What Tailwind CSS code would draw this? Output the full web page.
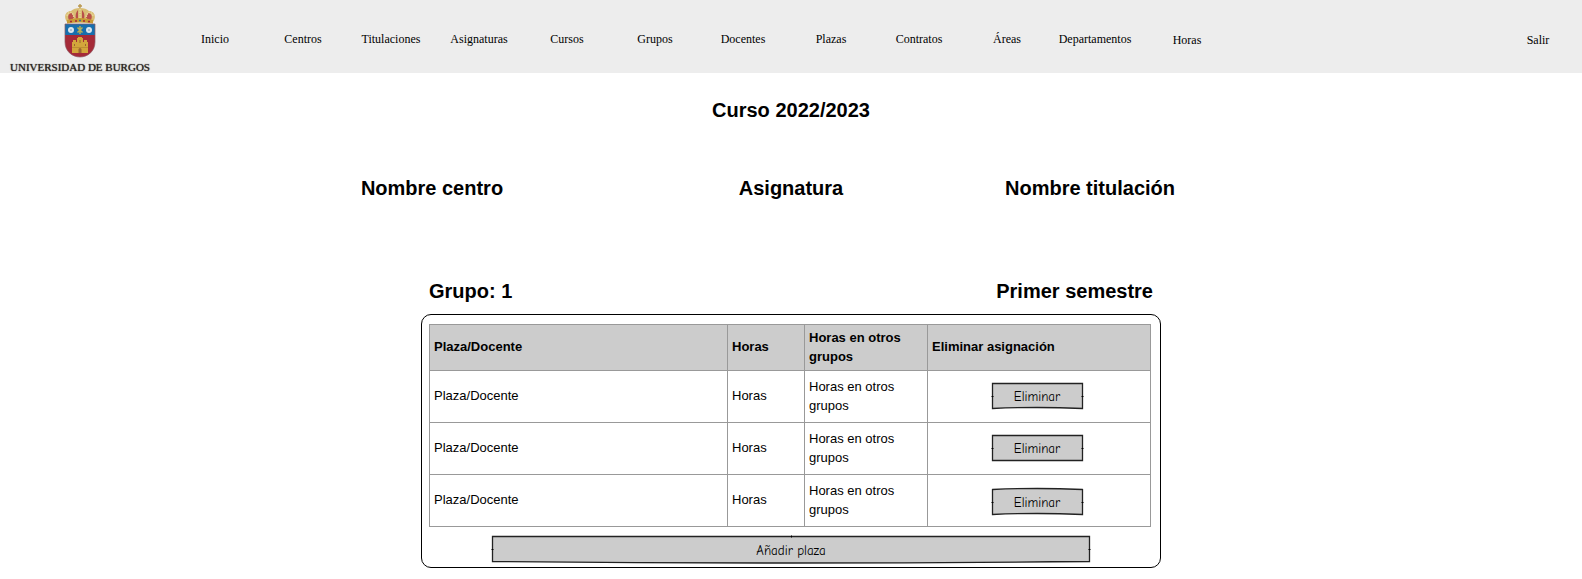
<!DOCTYPE html>
<html lang="es">
<head>
<meta charset="utf-8">
<meta name="viewport" content="width=device-width, initial-scale=1">
<title>Universidad de Burgos - Curso 2022/2023</title>
<script src="https://cdn.jsdelivr.net/npm/@tailwindcss/browser@4"></script>
</head>
<body class="min-h-screen bg-white font-['Liberation_Sans',Arial,sans-serif] text-black">

<header class="flex h-[73px] items-stretch bg-[#ededed] font-['Liberation_Serif',serif] text-xs">
  <a href="#" class="flex w-[171px] shrink-0 flex-col items-start pt-1 pl-[10px] text-[11px] leading-3 whitespace-nowrap text-[#2b2522] text-shadow-[0_0_1px_#2b2522]">
    <svg class="mb-[3px] ml-[54px] block h-[54px] w-8" viewBox="0 0 32 54" aria-hidden="true">
      <!-- crown -->
      <path d="M16 0v5M14 2h4" stroke="#b9974e" stroke-width="1.4"/>
      <path d="M3 18C-1 12 2 7 7 7c2-2 5-3 9-3s7 1 9 3c5 0 8 5 4 11z" fill="#d9bd74"/>
      <path d="M5 16C3 12 5 9 8 9l3 7zM21 16l3-7c3 0 5 3 3 7zM12 15c-1-4 0-7 2-9v9zM18 15V6c2 2 3 5 2 9z" fill="#b9504a"/>
      <path d="M3 12C4 7 10 6 10 16M29 12C28 7 22 6 22 16M16 5v12" fill="none" stroke="#e8d69b" stroke-width="1.5" stroke-dasharray="1.5 1"/>
      <path d="M3 16q13-4 26 0v3.500q-13-2-26 0z" fill="#c89b35"/>
      <path d="M6 17.500h2M11 17h2M19 17h2M24 17.500h2" stroke="#a62835" stroke-width="1.300"/>
      <path d="M15 16.500h2" stroke="#3f7293" stroke-width="1.500"/>
      <!-- shield -->
      <path d="M1 20h30v18c0 9-7 15-15 15S1 47 1 38z" fill="#a52a38"/>
      <path d="M1 20h30v11H1z" fill="#176fae"/>
      <path d="M1 20h30v18c0 9-7 15-15 15S1 47 1 38z" fill="none" stroke="#8d5961" stroke-width=".7"/>
      <circle cx="7" cy="26" r="3" fill="#dce6ec"/>
      <circle cx="25" cy="26" r="3" fill="#dce6ec"/>
      <circle cx="7" cy="26" r="1" fill="#9cb5c6"/>
      <circle cx="25" cy="26" r="1" fill="#9cb5c6"/>
      <path d="M16 22v8M13.500 23.500l5 5M18.500 23.500l-5 5" stroke="#b5ae58" stroke-width="1.500"/>
      <!-- castle -->
      <path d="M8 49V38h1v-2h3v2h1v-4h1v-1h4v1h1v4h1v-2h3v2h1v11z" fill="#d3a63b"/>
      <path d="M14.500 49v-4q1.500-2 3 0v4zM10 40h1v2h-1zM21 40h1v2h-1zM15.500 36h1v3h-1z" fill="#9b6531"/>
      <path d="M8 43.500h16" stroke="#b3822f" stroke-width=".7"/>
    </svg>
    <span>UNIVERSIDAD DE BURGOS</span>
  </a>
  <nav class="flex flex-1 items-center pt-1 text-center leading-4" aria-label="Principal">
    <a href="#" class="w-22">Inicio</a>
    <a href="#" class="w-22">Centros</a>
    <a href="#" class="w-22">Titulaciones</a>
    <a href="#" class="w-22">Asignaturas</a>
    <a href="#" class="w-22">Cursos</a>
    <a href="#" class="w-22">Grupos</a>
    <a href="#" class="w-22">Docentes</a>
    <a href="#" class="w-22">Plazas</a>
    <a href="#" class="w-22">Contratos</a>
    <a href="#" class="w-22">Áreas</a>
    <a href="#" class="w-22">Departamentos</a>
    <a href="#" class="ml-1 w-22 pt-[2px]">Horas</a>
    <a href="#" class="ml-auto w-22 pt-[2px]">Salir</a>
  </nav>
</header>

<main class="text-xl leading-6 font-bold">
  <h1 class="pt-[25px] text-center">Curso 2022/2023</h1>

  <div class="mx-auto mt-[54px] grid max-w-[1076px] grid-cols-[358fr_360fr_238fr_120fr] text-center">
    <h2>Nombre centro</h2>
    <h2>Asignatura</h2>
    <h2>Nombre titulación</h2>
  </div>

  <section class="mx-auto mt-[79px] max-w-[740px]">
    <div class="flex justify-between px-2">
      <h2>Grupo: 1</h2>
      <h2>Primer semestre</h2>
    </div>

    <div class="mt-[11px] rounded-[10px] border border-black pt-[9px] pr-[9px] pb-[5px] pl-[7px] text-[13px] leading-[19px] font-normal">
      <table class="w-full table-fixed border-collapse text-left [&_td]:border [&_td]:border-[#999] [&_td]:px-1 [&_td]:pt-0 [&_td]:pb-[2px] [&_th]:border [&_th]:border-[#999] [&_th]:px-1 [&_th]:pt-0 [&_th]:pb-[2px]">
        <colgroup><col class="w-[298px]"><col class="w-[77px]"><col class="w-[123px]"><col></colgroup>
        <thead>
          <tr class="h-[46px] bg-[#cccccc]"><th scope="col">Plaza/Docente</th><th scope="col">Horas</th><th scope="col">Horas en otros grupos</th><th scope="col">Eliminar asignación</th></tr>
        </thead>
        <tbody>
          <tr class="h-[52px]">
            <td>Plaza/Docente</td><td>Horas</td><td>Horas en otros grupos</td>
            <td class="pr-2!"><button type="button" class="relative isolate mx-auto block h-[26px] w-[91px] pt-[2px] font-['Comic_Neue',cursive] text-[13px]">
              <svg class="absolute inset-0 -z-10 size-full overflow-visible" viewBox="0 0 91 26" preserveAspectRatio="none" aria-hidden="true"><path d="M.5.5h90v25Q45 23.500.5 25.500z" fill="#ccc" stroke="#222" stroke-width="1.300"/><path d="M-.5 13.500h2M89.500 13.500h2" stroke="#000"/></svg>Eliminar</button></td>
          </tr>
          <tr class="h-[52px]">
            <td>Plaza/Docente</td><td>Horas</td><td>Horas en otros grupos</td>
            <td class="pr-2!"><button type="button" class="relative isolate mx-auto block h-[26px] w-[91px] pt-[2px] font-['Comic_Neue',cursive] text-[13px]">
              <svg class="absolute inset-0 -z-10 size-full overflow-visible" viewBox="0 0 91 26" preserveAspectRatio="none" aria-hidden="true"><path d="M.5.5h90v25H.5z" fill="#ccc" stroke="#222" stroke-width="1.300"/><path d="M-.5 13.500h2M89.500 13.500h2" stroke="#000"/></svg>Eliminar</button></td>
          </tr>
          <tr class="h-[52px]">
            <td>Plaza/Docente</td><td>Horas</td><td>Horas en otros grupos</td>
            <td class="pt-[2px]! pr-2! pb-0!"><button type="button" class="relative isolate mx-auto block h-[26px] w-[91px] pt-[2px] font-['Comic_Neue',cursive] text-[13px]">
              <svg class="absolute inset-0 -z-10 size-full overflow-visible" viewBox="0 0 91 26" preserveAspectRatio="none" aria-hidden="true"><path d="M.5.5Q45-1.500 90.500.5v25Q45 23.500.5 25.500z" fill="#ccc" stroke="#222" stroke-width="1.300"/><path d="M-.5 13.500h2M89.500 13.500h2" stroke="#000"/></svg>Eliminar</button></td>
          </tr>
        </tbody>
      </table>
      <div class="pl-[2px]">
        <button type="button" class="relative isolate mx-auto mt-[9px] block h-[26px] w-[598px] max-w-full pt-[2px] font-['Comic_Neue',cursive] text-[13px]">
          <svg class="absolute inset-0 -z-10 size-full overflow-visible" viewBox="0 0 598 26" preserveAspectRatio="none" aria-hidden="true"><path d="M.5.5h597v25Q299 28.500.5 25.500z" fill="#ccc" stroke="#222" stroke-width="1.300"/><path d="M-.5 13.500h2M596.500 13.500h2M299.500-.5v2" stroke="#000"/></svg>Añadir plaza</button>
      </div>
    </div>
  </section>
</main>
</body>
</html>
